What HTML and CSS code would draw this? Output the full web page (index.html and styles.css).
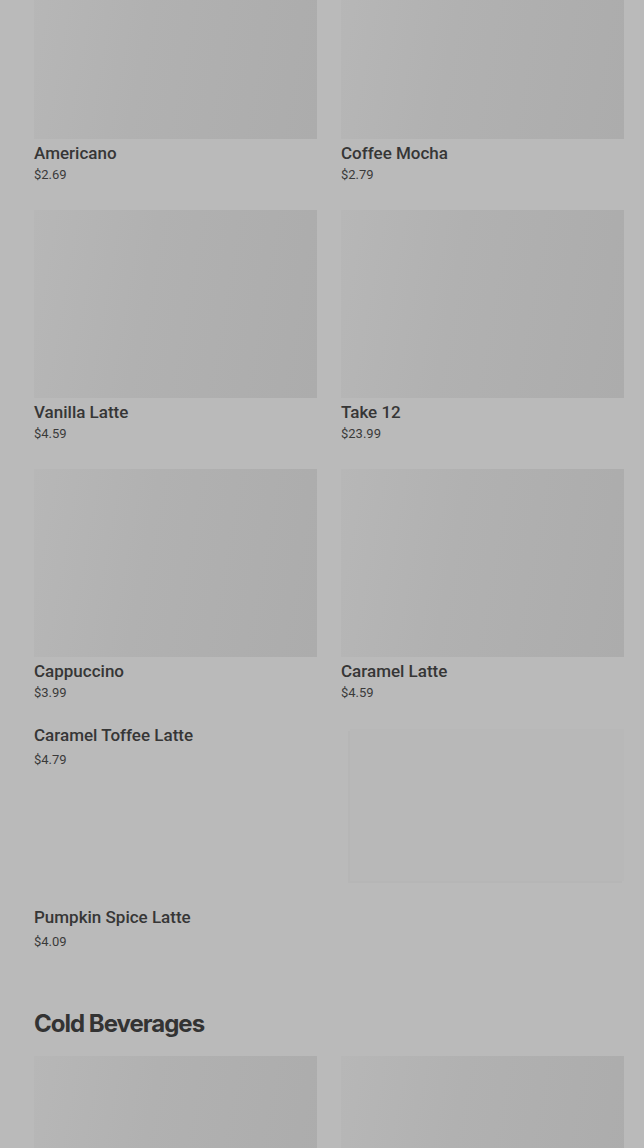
FILE: index.html
```html
<!DOCTYPE html>
<html>
<head>
<meta charset="utf-8">
<link rel="stylesheet" href="styles.css">
</head>
<body>
<main class="menu">
  <section class="grid first">
    <div class="card"><div class="thumb"></div><div class="name">Americano</div><div class="price">$2.69</div></div>
    <div class="card"><div class="thumb"></div><div class="name">Coffee Mocha</div><div class="price">$2.79</div></div>
    <div class="card"><div class="thumb"></div><div class="name">Vanilla Latte</div><div class="price">$4.59</div></div>
    <div class="card"><div class="thumb"></div><div class="name">Take 12</div><div class="price">$23.99</div></div>
    <div class="card"><div class="thumb"></div><div class="name">Cappuccino</div><div class="price">$3.99</div></div>
    <div class="card"><div class="thumb"></div><div class="name">Caramel Latte</div><div class="price">$4.59</div></div>
  </section>
  <section class="list">
    <div class="row with-img">
      <div class="info"><div class="name">Caramel Toffee Latte</div><div class="price lp">$4.79</div></div>
      <div class="side-img"></div>
    </div>
    <div class="row">
      <div class="info"><div class="name">Pumpkin Spice Latte</div><div class="price lp">$4.09</div></div>
    </div>
  </section>
  <h2 class="heading">Cold Beverages</h2>
  <section class="grid">
    <div class="card"><div class="thumb"></div></div>
    <div class="card"><div class="thumb"></div></div>
  </section>
</main>
</body>
</html>
```
FILE: styles.css
```css
html, body {
  margin: 0;
  padding: 0;
  background: #bababa;
  overflow: hidden;
}
.menu {
  padding: 0 20px 0 34px;
  font-family: Roboto, "Liberation Sans", sans-serif;
  color: #363636;
}
.grid {
  display: grid;
  grid-template-columns: 1fr 1fr;
  column-gap: 24px;
  row-gap: 26px;
}
.grid.first {
  margin-top: -49px;
}
.thumb {
  height: 188px;
  background: linear-gradient(100deg, #b7b7b7 0%, #b1b1b1 40%, #acacac 100%);
}
.name {
  margin-top: 4px;
  font-size: 17px;
  font-weight: 500;
  line-height: 20px;
}
.price {
  margin-top: 3px;
  font-size: 13px;
  line-height: 18px;
  color: #3a3a3a;
}
.list {
  margin-top: 23px;
  display: flex;
  flex-direction: column;
}
.row {
  display: flex;
  justify-content: space-between;
  align-items: flex-start;
}
.row.with-img {
  padding-bottom: 26px;
}
.row .name {
  margin-top: 0;
}
.price.lp {
  margin-top: 6px;
}
.side-img {
  width: 274px;
  height: 152px;
  margin-top: 4px;
  background: #b8b8b8;
  box-shadow: -2px 2px 1px rgba(0,0,0,0.02);
}
.heading {
  margin: 57px 0 16px;
  font-family: Inter, "Liberation Sans", sans-serif;
  font-size: 24px;
  font-weight: 700;
  letter-spacing: -1px;
  line-height: 32px;
  color: #333;
}
```
